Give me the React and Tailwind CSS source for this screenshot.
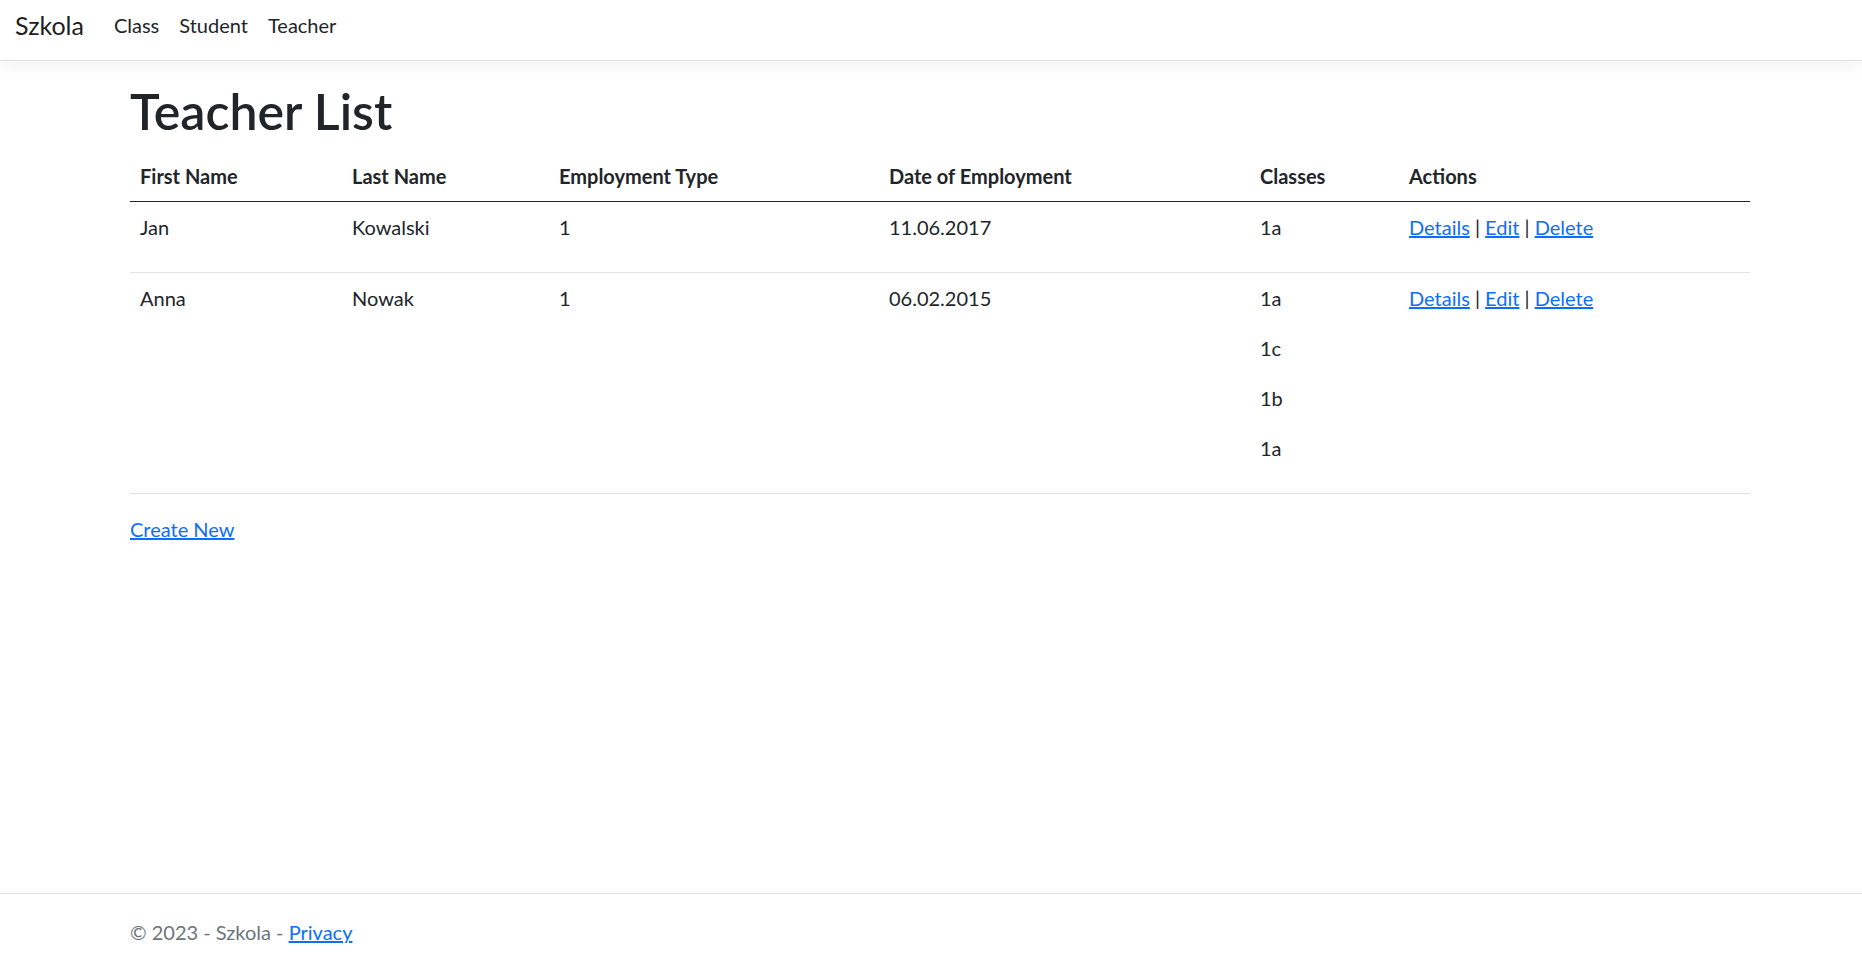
export default function App() {
  const teachers = [
    { first: "Jan", last: "Kowalski", type: "1", date: "11.06.2017", classes: ["1a"] },
    { first: "Anna", last: "Nowak", type: "1", date: "06.02.2015", classes: ["1a", "1c", "1b", "1a"] },
  ];
  const headers = ["First Name", "Last Name", "Employment Type", "Date of Employment", "Classes", "Actions"];
  const widths = ["w-[212px]", "w-[207px]", "w-[330px]", "w-[371px]", "w-[149px]", "w-[351px]"];

  return (
    <div className="min-h-screen flex flex-col bg-white text-[#212529] [font-family:Lato,'Open_Sans',sans-serif] text-[20px] leading-[30px]">
      <header className="h-[61px] border-b border-[#dee2e6] shadow-[0_5px_15px_rgba(0,0,0,0.05)] bg-white relative z-10 flex items-center px-[15px] pb-[10px]">
        <a href="#" className="text-[25px] leading-[37px] mr-[20px] text-[rgba(0,0,0,0.9)] no-underline">Szkola</a>
        <nav className="flex">
          <a href="#" className="px-[10px] text-[#212529] no-underline">Class</a>
          <a href="#" className="px-[10px] text-[#212529] no-underline">Student</a>
          <a href="#" className="px-[10px] text-[#212529] no-underline">Teacher</a>
        </nav>
      </header>

      <main className="flex-1 pt-[20px] pl-[130px]">
        <div className="w-[1620px]">
          <h1 className="text-[50px] leading-[60px] font-semibold mb-[10px]">Teacher List</h1>
          <table className="w-full table-fixed border-collapse mb-[20px]">
            <colgroup>
              {widths.map((w, i) => (
                <col key={i} className={w} />
              ))}
            </colgroup>
            <thead>
              <tr className="border-b border-[#212529]">
                {headers.map((h) => (
                  <th key={h} className="p-[10px] text-left font-bold align-top">{h}</th>
                ))}
              </tr>
            </thead>
            <tbody>
              {teachers.map((t) => (
                <tr key={t.first} className="border-b border-[#dee2e6]">
                  <td className="p-[10px] align-top">{t.first}</td>
                  <td className="p-[10px] align-top">{t.last}</td>
                  <td className="p-[10px] align-top">{t.type}</td>
                  <td className="p-[10px] align-top">{t.date}</td>
                  <td className="p-[10px] align-top">
                    {t.classes.map((c, i) => (
                      <p key={i} className="mb-[20px]">{c}</p>
                    ))}
                  </td>
                  <td className="p-[10px] align-top">
                    <a href="#" className="text-[#0d6efd] underline">Details</a>
                    {" | "}
                    <a href="#" className="text-[#0d6efd] underline">Edit</a>
                    {" | "}
                    <a href="#" className="text-[#0d6efd] underline">Delete</a>
                  </td>
                </tr>
              ))}
            </tbody>
          </table>
          <p>
            <a href="#" className="text-[#0d6efd] underline">Create New</a>
          </p>
        </div>
      </main>

      <footer className="h-[69px] border-t border-[#dee2e6] text-[#6c757d] pl-[130px] leading-[77px] overflow-hidden">
        © 2023 - Szkola - <a href="#" className="text-[#0d6efd] underline">Privacy</a>
      </footer>
    </div>
  );
}
